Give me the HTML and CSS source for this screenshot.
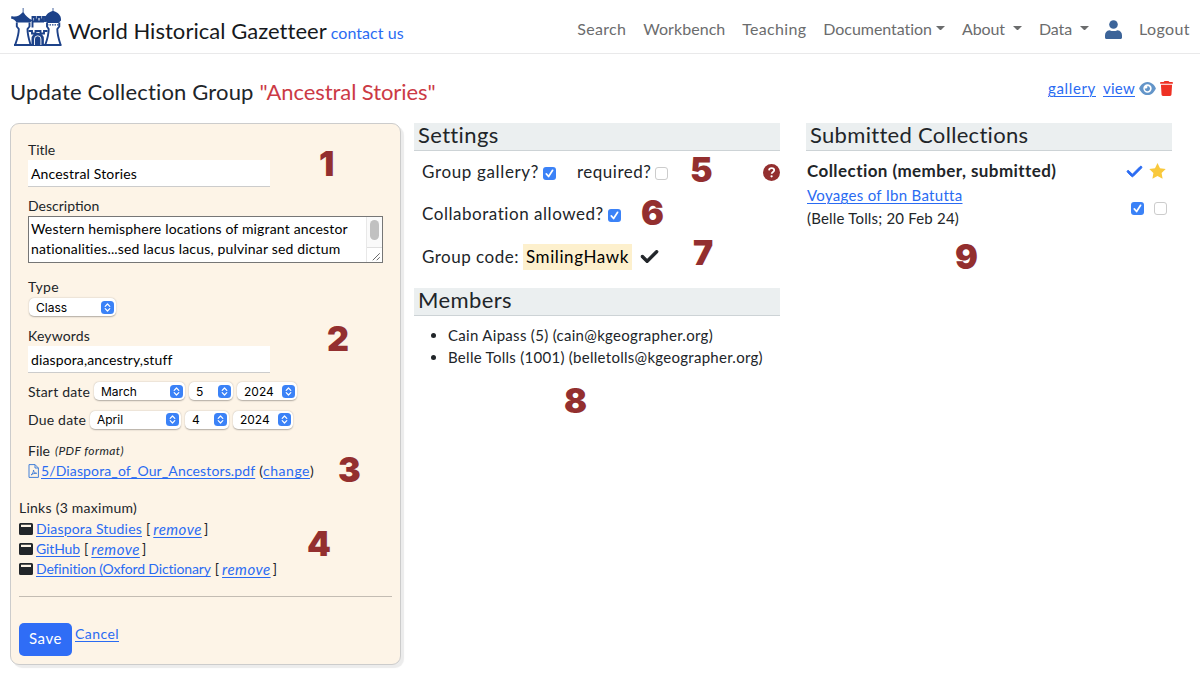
FILE: index.html
```html
<!DOCTYPE html>
<html lang="en">
<head>
<meta charset="utf-8">
<title>World Historical Gazetteer</title>
<link rel="stylesheet" href="styles.css">
</head>
<body>
<svg class="defs" width="0" height="0">
  <symbol id="check" viewBox="0 0 512 512"><path d="M470.600 105.400c12.500 12.500 12.500 32.800 0 45.300l-256 256c-12.500 12.500-32.800 12.500-45.300 0l-128-128c-12.500-12.500-12.500-32.800 0-45.300s32.800-12.500 45.300 0L192 338.700 425.400 105.400c12.500-12.500 32.800-12.500 45.300 0z" stroke="currentColor" stroke-width="28"/></symbol>
  <symbol id="tick" viewBox="0 0 13 13"><path d="M3.300 6.900l2.300 2.600 4-6.200" fill="none" stroke="#fff" stroke-width="1.700" stroke-linecap="round" stroke-linejoin="round"/></symbol>
  <symbol id="arrows" viewBox="0 0 13 13"><path d="M4.200 5.300l2.300-2.300 2.300 2.300M4.200 7.700l2.300 2.300 2.300-2.300" fill="none" stroke="#fff" stroke-width="1.200" stroke-linecap="round" stroke-linejoin="round"/></symbol>
  <symbol id="window" viewBox="0 0 14 12"><path fill-rule="evenodd" d="M1.500 0h11A1.500 1.500 0 0 1 14 1.500v9a1.500 1.500 0 0 1-1.500 1.500h-11A1.500 1.500 0 0 1 0 10.500v-9A1.500 1.500 0 0 1 1.500 0zM2 1.700v2.300h10V1.700z"/></symbol>
</svg>
<header class="navbar">
  <svg class="logo" viewBox="0 0 52 38">
    <g fill="#1d4289">
      <path d="M11.700 0h.8v4.300c2 3.500 4.800 6 9 8l-2.500 2.200H5.500C4.500 12.300 2 11 0 10.600L.5 8c4.500 1.600 8-.2 11.200-3.700z"/>
      <path d="M41.600 0h.8v3c4.200 1.300 7.600 4 7.600 8.300v1.200l-2.500 2.500h-11L34 12.500v-1.200C34 7 37.400 4.300 41.600 3z"/>
      <path d="M3 36h47.500v2H3z"/>
      <path d="M20.500 38v-7a6.200 6.200 0 0 1 12.400 0v7z"/>
    </g>
    <g fill="none" stroke="#1d4289" stroke-width="1.900">
      <path d="M5.800 14.500v4l2 2.500c0 6-1.800 10.500-3.500 15.500M18.500 14.500v4l-2 2.500c0 6 1.500 10.500 3 15.500M36 14.500v4l1.700 2.500c0 6-1.500 10.500-3.300 15.500M48.300 14.500v4l-2 2.500c0 6 1.500 10.500 3.200 15.500"/>
      <path d="M21.500 19.500V9h2.500v2.500h2.500V9h3v2.500H32V9h2v5M21 13.500h12M17.500 23h3.500v2.500h3.500V23h5v2.500H33V23h3.500"/>
      <path d="M36 16.800h12" stroke-width="1.300" stroke-dasharray="1.500 1"/>
    </g>
    <path d="M23.500 37v-6a3.200 3.200 0 0 1 6.400 0v6" fill="none" stroke="#fff" stroke-width=".9"/>
  </svg>
  <span class="brand">World Historical Gazetteer</span>
  <a class="contact">contact us</a>
  <nav class="menu">
    <a class="search">Search</a>
    <a class="workbench">Workbench</a>
    <a class="teaching">Teaching</a>
    <a class="drop"><span class="docs">Documentation</span><i class="caret"></i></a>
    <a class="drop wide"><span class="about">About</span><i class="caret"></i></a>
    <a class="drop wide"><span class="data">Data</span><i class="caret"></i></a>
    <svg class="user" viewBox="0 0 17 19"><circle cx="8.500" cy="4.500" r="4.300"/><path d="M4.500 10.200c2.500 1.200 5.500 1.200 8 0C15.500 10.500 17 12.500 17 15.500v2c0 .9-.6 1.500-1.500 1.500h-14C.6 19 0 18.400 0 17.500v-2c0-3 1.500-5 4.500-5.300z"/></svg>
    <a class="logout">Logout</a>
  </nav>
</header>
<div class="titlebar">
  <h1><span class="h-update">Update Collection Group</span><span class="h-name">"Ancestral Stories"</span></h1>
  <div class="actions">
    <a class="link gallery">gallery</a>
    <a class="link view">view</a>
    <svg class="eye" viewBox="0 0 576 448"><path fill-rule="evenodd" d="M288 0C207 0 142 37 95 80 48 124 17 176 2 212c-3 8-3 16 0 24 15 36 46 88 93 132 47 43 112 80 193 80s146-37 193-80c47-44 78-96 93-132 3-8 3-16 0-24-15-36-46-88-93-132C434 37 369 0 288 0zM144 224a144 144 0 1 1 288 0 144 144 0 0 1-288 0zm144-64c0 35-29 64-64 64-7 0-14-1-20-3-6-2-12 2-12 7 0 51 41 92 92 92s92-41 92-92-41-92-92-92c-5 0-7 3-4 8 5 5 8 11 8 16z"/></svg>
    <svg class="trash" viewBox="0 0 448 512"><path d="M135 18C141 7 152 0 164 0h120c12 0 23 7 29 18l7 14h96c18 0 32 14 32 32s-14 32-32 32H32C14 96 0 82 0 64s14-32 32-32h96zM32 124h384l-21 343c-2 25-23 45-48 45H101c-25 0-46-20-48-45z"/></svg>
  </div>
</div>
<main class="columns">
  <form class="card">
    <div class="fields">
      <label class="lbl"><span class="l-title">Title</span></label>
      <div class="input"><span class="i-title">Ancestral Stories</span></div>
      <label class="lbl gap9"><span class="l-desc">Description</span></label>
      <div class="textarea">
        <div class="lines"><span class="ta1">Western hemisphere locations of migrant ancestor</span><span class="ta2">nationalities...sed lacus lacus, pulvinar sed dictum</span></div>
        <div class="scroll"><i class="thumb"></i><svg class="grip" viewBox="0 0 16 16"><path d="M6 14l8-8M10.500 14l3.500-3.500" stroke="#555" fill="none"/></svg></div>
      </div>
      <label class="lbl gap14"><span class="l-type">Type</span></label>
      <div class="select type">Class<svg><use href="#arrows"/></svg></div>
      <label class="lbl gap9"><span class="l-key">Keywords</span></label>
      <div class="input"><span class="i-key">diaspora,ancestry,stuff</span></div>
      <div class="dates"><span class="l-start">Start date</span><div class="select month">March<svg><use href="#arrows"/></svg></div><div class="select day">5<svg><use href="#arrows"/></svg></div><div class="select year">2024<svg><use href="#arrows"/></svg></div></div>
      <div class="dates"><span class="l-due">Due date</span><div class="select month">April<svg><use href="#arrows"/></svg></div><div class="select day">4<svg><use href="#arrows"/></svg></div><div class="select year">2024<svg><use href="#arrows"/></svg></div></div>
      <div class="line file"><span>File</span><em class="pdf-note">(PDF format)</em></div>
      <div class="line"><svg class="pdf" viewBox="0 0 11 14"><path d="M1 .6h6l3.400 3.400v9.400H1zM7 .6V4h3.400M3 11c1.500-1 2.500-3 2.500-5 .3 2.200 1.500 3.200 3.200 3.300C6.500 9 4.500 10 3 11z"/></svg><a class="link pdf-link">5/Diaspora_of_Our_Ancestors.pdf</a><span class="sp">(</span><a class="link change">change</a>)</div>
    </div>
    <div class="links">
      <div class="line"><span class="l-links">Links (3 maximum)</span></div>
      <div class="line"><svg class="win"><use href="#window"/></svg><a class="link lk1">Diaspora Studies</a><span class="br">[</span><a class="link rem">remove</a><span class="br2">]</span></div>
      <div class="line"><svg class="win"><use href="#window"/></svg><a class="link lk2">GitHub</a><span class="br">[</span><a class="link rem">remove</a><span class="br2">]</span></div>
      <div class="line"><svg class="win"><use href="#window"/></svg><a class="link lk3">Definition (Oxford Dictionary</a><span class="br">[</span><a class="link rem">remove</a><span class="br2">]</span></div>
    </div>
    <hr>
    <div class="buttons"><span class="save">Save</span><a class="link cancel">Cancel</a></div>
  </form>
  <section class="col">
    <h2><span class="h-set">Settings</span></h2>
    <div class="setting"><span class="s-gal">Group gallery?</span><i class="cb on"><svg><use href="#tick"/></svg></i><span class="s-req">required?</span><i class="cb"></i>
      <svg class="help" viewBox="0 0 17 17"><circle cx="8.500" cy="8.500" r="8.500"/><path d="M6 6.300c.2-1.400 1.200-2.100 2.600-2.100 1.500 0 2.600.8 2.600 2.100 0 1.700-2.500 1.700-2.500 3.500" fill="none" stroke="#fff" stroke-width="1.800"/><circle cx="8.600" cy="12.300" r="1.150" fill="#fff"/></svg></div>
    <div class="setting"><span class="s-col">Collaboration allowed?</span><i class="cb on"><svg><use href="#tick"/></svg></i></div>
    <div class="setting"><span class="s-code">Group code:</span><span class="code">SmilingHawk</span><svg class="codecheck"><use href="#check"/></svg></div>
    <h2 class="members"><span class="h-mem">Members</span></h2>
    <ul><li><span class="m1">Cain Aipass (5) (cain@kgeographer.org)</span></li><li><span class="m2">Belle Tolls (1001) (belletolls@kgeographer.org)</span></li></ul>
  </section>
  <section class="col right">
    <h2><span class="h-sub">Submitted Collections</span></h2>
    <div class="subhead"><strong class="r-head">Collection (member, submitted)</strong><svg class="bluecheck"><use href="#check"/></svg><svg class="star" viewBox="0 0 17 16"><path d="M8.500 0l2.500 5.200 5.700.8-4.100 4 1 5.700-5.100-2.700-5.100 2.700 1-5.700L.3 6 6 5.200z"/></svg></div>
    <div class="subrow"><div class="who"><a class="link r-voy">Voyages of Ibn Batutta</a><span class="r-who">(Belle Tolls; 20 Feb 24)</span></div><i class="cb on"><svg><use href="#tick"/></svg></i><i class="cb"></i></div>
  </section>
</main>
<b class="mark n1">1</b><b class="mark n2">2</b><b class="mark n3">3</b><b class="mark n4">4</b><b class="mark n5">5</b><b class="mark n6">6</b><b class="mark n7">7</b><b class="mark n8">8</b><b class="mark n9">9</b>
</body>
</html>
```

FILE: styles.css
```css
* { box-sizing: border-box; }
body { margin: 0; width: 1200px; height: 679px; overflow: hidden; background: #fff; color: #212529; font-family: Lato, sans-serif; font-size: 14px; white-space: nowrap; }
svg { display: block; flex: none; fill: currentColor; }
.defs { position: absolute; }
i { font-style: normal; }
.link { color: #2a6bf2; text-decoration: underline; text-decoration-thickness: 1px; text-underline-offset: 2px; }

/* Top navigation */
.navbar { display: flex; align-items: center; height: 54px; padding: 0 10px 0 11px; border-bottom: 1px solid #e9e9ea; }
.logo { width: 52px; height: 38px; margin-right: 5px; }
.brand { font-size: 22px; line-height: 28px; color: #16191c; padding-top: 9px; letter-spacing: .043px; }
.contact { font-size: 16px; line-height: 20px; color: #2a6bf2; margin-left: 4px; padding-top: 13px; letter-spacing: .06px; }
.menu { display: flex; align-items: center; gap: 17px; margin-left: auto; padding-top: 5px; font-size: 16px; line-height: 20px; color: #6b6c6d; }
.search { letter-spacing: .315px; }
.workbench { letter-spacing: .045px; }
.teaching { letter-spacing: .305px; }
.docs { letter-spacing: -.043px; }
.about { letter-spacing: -.1px; }
.data { letter-spacing: -.125px; }
.logout { letter-spacing: .4px; }
.drop { display: flex; align-items: center; gap: 4px; }
.wide { gap: 8px; }
.caret { width: 9px; border: 4.500px solid transparent; border-top-color: currentColor; border-bottom: 0; margin-top: -2px; }
.user { width: 17px; height: 19px; margin-left: -1px; color: #3c6499; }

/* Page title and actions */
.titlebar { display: flex; justify-content: space-between; padding: 22px 27px 0 10px; height: 69px; }
h1 { margin: 0; display: flex; gap: 6px; font-size: 22px; line-height: 32px; font-weight: 400; }
.h-update { letter-spacing: .161px; }
.h-name { color: #cb3a45; letter-spacing: -.068px; }
.actions { display: flex; font-size: 15px; line-height: 24px; }
.gallery { margin-right: 7px; letter-spacing: .65px; }
.view { margin-right: 4px; letter-spacing: .258px; }
.eye { width: 17px; height: 13px; margin: 6px 4px 0 0; color: #6395c9; }
.trash { width: 13px; height: 15px; margin-top: 5px; color: #ee3124; }

/* Edit form */
.columns { display: flex; padding-left: 10px; }
.card { width: 391px; height: 542px; padding: 16px 8px 0; border: 1px solid #ccc; border-radius: 9px; background: #fdf4e7; box-shadow: 3px 3px 1px #ececec; margin-right: 13px; }
.fields { padding-left: 9px; }
.lbl { display: block; height: 20px; line-height: 20px; }
.gap9 { margin-top: 9px; }
.gap14 { margin-top: 14px; }
.l-title { letter-spacing: -.063px; }
.l-type { letter-spacing: .371px; }
.l-key { letter-spacing: .158px; }
.l-start, .l-due { letter-spacing: .197px; }
.input { width: 242px; height: 27px; line-height: 27px; padding-left: 3px; background: #fff; border-bottom: 1px solid #ccc; color: #000; }
.i-title { letter-spacing: .162px; }
.i-key { letter-spacing: .126px; }
.textarea { display: flex; justify-content: space-between; width: 355px; height: 47px; border: 1px solid #767676; background: #fff; color: #000; margin-bottom: 1px; }
.lines { display: flex; flex-direction: column; padding: 2px; line-height: 20px; letter-spacing: .166px; }
.scroll { display: flex; flex-direction: column; align-items: center; width: 16px; border-left: 1px solid #e8e8e8; background: #fafafa; padding-top: 3px; }
.thumb { width: 9px; height: 20px; border-radius: 5px; background: #c1c1c1; }
.grip { width: 15px; height: 15px; margin-top: 7px; border-top: 1px solid #e0e0e0; background: #fff; }
.select { display: flex; align-items: center; justify-content: space-between; height: 18px; padding: 0 2px 0 7px; border-radius: 5px; background: #fff; box-shadow: 0 .5px 1.500px rgba(0,0,0,.3); color: #000; font: 12px Inter, sans-serif; }
.select svg { width: 13px; height: 13px; border-radius: 3.500px; background: #3b82f7; }
.type { width: 87px; margin: 1px 0 9.500px 1px; }
.dates { display: flex; align-items: center; height: 20px; margin-top: 8.500px; }
.month { width: 91px; margin-left: 4px; }
.day { width: 44px; margin-left: 4px; }
.year { width: 60px; margin-left: 4px; }
.line { display: flex; align-items: center; height: 20.300px; line-height: 20px; }
.file { margin-top: 11.500px; gap: 5px; }
.pdf-note { font-size: 12px; letter-spacing: .4px; }
.pdf { width: 11px; height: 14px; margin-right: 2px; fill: none; stroke: #4580d8; }
.pdf-link { letter-spacing: .13px; }
.change { letter-spacing: .529px; }
.sp { margin-left: 4px; }
.links { margin-top: 16.500px; }
.l-links { letter-spacing: .253px; }
.lk1 { letter-spacing: .189px; }
.lk2 { letter-spacing: -.128px; }
.lk3 { letter-spacing: -.155px; }
.win { width: 14px; height: 12px; margin-right: 3px; }
.br { margin: 0 3px 0 4px; }
.br2 { margin-left: 2px; }
.rem { font-style: italic; font-size: 15px; letter-spacing: .5px; }
hr { margin: 16.500px 0 26px; border: 0; border-top: 1px solid #c3bcb3; }
.buttons { display: flex; }
.save { width: 53px; height: 33px; line-height: 31px; padding-left: 10px; border-radius: 5px; background: #2f6df6; color: #fff; font-size: 15px; letter-spacing: .555px; margin-right: 3px; }
.cancel { line-height: 22px; letter-spacing: .435px; }

/* Settings, members and submissions */
.col { width: 366px; }
.right { margin-left: 26px; }
h2 { margin: 0; height: 28px; padding-left: 4px; font-size: 22px; line-height: 24px; font-weight: 400; background: #ebeff0; border-bottom: 1px solid #cdd3d6; }
.h-set { letter-spacing: .36px; }
.h-mem { letter-spacing: .4px; }
.h-sub { letter-spacing: .31px; }
.setting { display: flex; align-items: center; height: 42.300px; padding-left: 8px; font-size: 17px; line-height: 20px; }
.s-gal { letter-spacing: .645px; }
.s-req { margin-left: 21px; letter-spacing: .5px; }
.s-col { letter-spacing: .54px; }
.s-code { letter-spacing: .5px; }
.cb { display: block; flex: none; width: 13px; height: 13px; margin: 2px 0 0 4px; border: 1px solid #ccc; border-radius: 3px; background: #fff; }
.cb.on { border: 0; background: #3b82f7; }
.cb svg { width: 13px; height: 13px; }
.help { width: 17px; height: 17px; margin-left: auto; color: #932f2f; }
.code { margin-left: 4px; padding: 3px; height: 26px; background: #fdf0cd; color: #000; letter-spacing: .59px; }
.codecheck { width: 19px; height: 19px; margin-left: 8px; }
.members { margin-top: 10px; }
ul { margin: 8px 0 0; padding-left: 34px; font-size: 15px; line-height: 22.500px; }
.m1 { letter-spacing: .305px; }
.m2 { letter-spacing: .28px; }
.subhead { display: flex; align-items: center; height: 22px; margin-top: 9px; padding-left: 1px; font-size: 17px; line-height: 20px; }
.r-head { width: 249px; letter-spacing: .43px; }
.bluecheck { width: 17px; height: 17px; margin-left: 70px; color: #2a6bf2; }
.star { width: 17px; height: 16px; margin-left: 6px; color: #f9c93c; }
.subrow { display: flex; align-items: center; margin-top: 2px; padding-left: 1px; font-size: 15px; line-height: 22.500px; }
.who { display: flex; flex-direction: column; align-items: flex-start; width: 314px; }
.r-voy { letter-spacing: .295px; }
.r-who { letter-spacing: .19px; }
.subrow .cb { margin: 3px 0 0 10px; }

/* Numbered callouts laid over the page */
.mark { position: absolute; font: 900 34px/34px Inter, sans-serif; color: #932f2f; }
.n1 { left: 319px; top: 147px; }
.n2 { left: 327px; top: 322px; }
.n3 { left: 338px; top: 453px; }
.n4 { left: 307px; top: 527px; }
.n5 { left: 690px; top: 153px; }
.n6 { left: 641px; top: 196px; }
.n7 { left: 693px; top: 236px; }
.n8 { left: 564px; top: 384px; }
.n9 { left: 955px; top: 240px; }
```
